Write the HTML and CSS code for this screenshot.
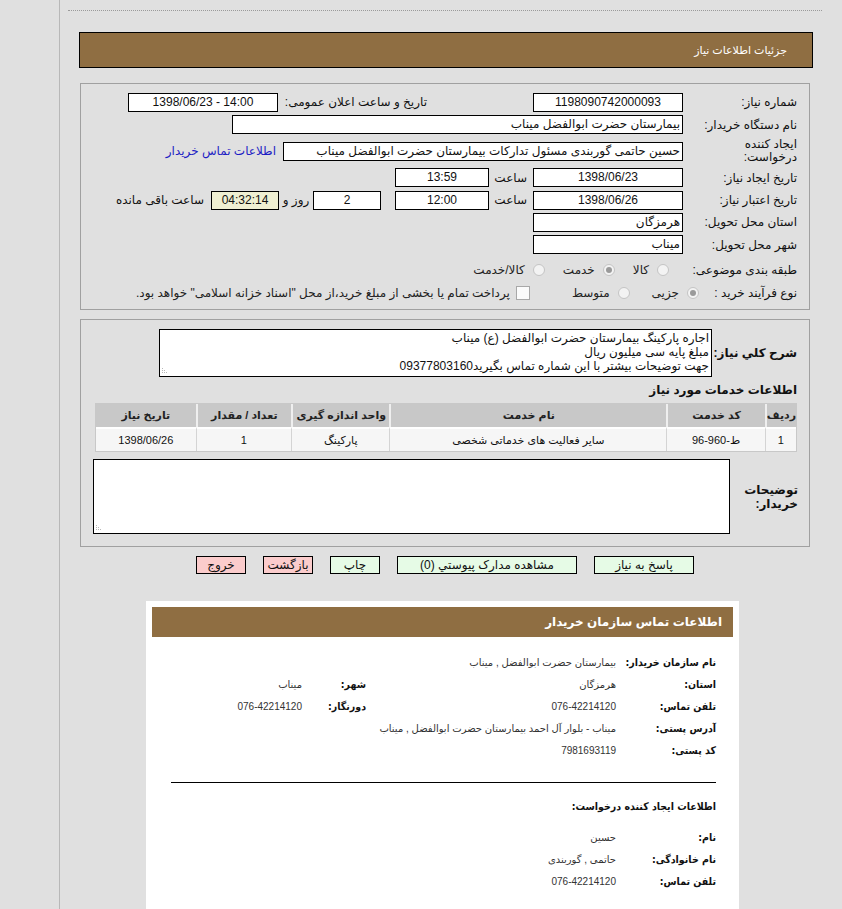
FILE: index.html
```html
<!DOCTYPE html>
<html lang="fa">
<head>
<meta charset="utf-8">
<title>جزئیات اطلاعات نیاز</title>
<link rel="stylesheet" href="styles.css">
</head>
<body>
<div class="side"></div>
<div class="main" dir="rtl">
  <div class="dots"></div>
  <div class="title">جزئیات اطلاعات نیاز</div>

  <div class="panel p1">
    <div class="row h22">
      <div class="lbl">شماره نیاز:</div>
      <div class="box w150 c">1198090742000093</div>
      <div class="lbl2">تاریخ و ساعت اعلان عمومی:</div>
      <div class="box w150 c ltr">1398/06/23 - 14:00</div>
    </div>
    <div class="row h23">
      <div class="lbl">نام دستگاه خریدار:</div>
      <div class="box w451 r fa">بیمارستان حضرت ابوالفضل میناب</div>
    </div>
    <div class="row h30">
      <div class="lbl two">ایجاد کننده<br>درخواست:</div>
      <div class="box w400 r fa">حسین حاتمی گوربندی مسئول تدارکات بیمارستان حضرت ابوالفضل میناب</div>
      <a class="link" href="#">اطلاعات تماس خریدار</a>
    </div>
    <div class="row h23">
      <div class="lbl">تاریخ ایجاد نیاز:</div>
      <div class="box w150 c">1398/06/23</div>
      <div class="sa">ساعت</div>
      <div class="box w95 c">13:59</div>
    </div>
    <div class="row h22">
      <div class="lbl">تاریخ اعتبار نیاز:</div>
      <div class="box w150 c">1398/06/26</div>
      <div class="sa">ساعت</div>
      <div class="box w95 c">12:00</div>
      <div class="box w68 c gap14">2</div>
      <div class="rz">روز و</div>
      <div class="box w68 c yel">04:32:14</div>
      <div class="rem">ساعت باقی مانده</div>
    </div>
    <div class="row h22">
      <div class="lbl">استان محل تحویل:</div>
      <div class="box w150 r fa">هرمزگان</div>
    </div>
    <div class="row h23">
      <div class="lbl">شهر محل تحویل:</div>
      <div class="box w150 r fa">میناب</div>
    </div>
    <div class="row h27">
      <div class="lbl">طبقه بندی موضوعی:</div>
      <div class="opts o1">
        <span class="opt"><span class="radio"></span>کالا</span>
        <span class="opt"><span class="radio on"></span>خدمت</span>
        <span class="opt"><span class="radio"></span>کالا/خدمت</span>
      </div>
    </div>
    <div class="row h20">
      <div class="lbl narrow">نوع فرآیند خرید :</div>
      <div class="opts o2">
        <span class="opt"><span class="radio on"></span>جزیی</span>
        <span class="opt"><span class="radio"></span>متوسط</span>
        <span class="opt wide"><span class="check"></span>پرداخت تمام یا بخشی از مبلغ خرید،از محل "اسناد خزانه اسلامی" خواهد بود.</span>
      </div>
    </div>
  </div>

  <div class="panel p2">
    <div class="row">
      <div class="blbl">شرح کلي نياز:</div>
      <div class="area a1">
        <div>اجاره پارکینگ بیمارستان حضرت ابوالفضل (ع) میناب</div>
        <div>مبلغ پایه سی میلیون ریال</div>
        <div>جهت توضیحات بیشتر با این شماره تماس بگیرید09377803160</div>
        <svg class="grip" width="8" height="8" viewBox="0 0 8 8"><g fill="#b8b8b8"><rect x="1" y="1" width="1" height="1"/><rect x="1" y="3" width="1" height="1"/><rect x="3" y="3" width="1" height="1"/><rect x="1" y="5" width="1" height="1"/><rect x="3" y="5" width="1" height="1"/><rect x="5" y="5" width="1" height="1"/></g></svg>
      </div>
    </div>
    <div class="sub">اطلاعات خدمات مورد نیاز</div>
    <table class="grid">
      <thead>
        <tr>
          <th class="c1">ردیف</th>
          <th class="c2">کد خدمت</th>
          <th class="c3">نام خدمت</th>
          <th class="c4">واحد اندازه گیری</th>
          <th class="c5">تعداد / مقدار</th>
          <th class="c6">تاریخ نیاز</th>
        </tr>
      </thead>
      <tbody>
        <tr>
          <td>1</td>
          <td>ط-960-96</td>
          <td>سایر فعالیت های خدماتی شخصی</td>
          <td>پارکینگ</td>
          <td>1</td>
          <td>1398/06/26</td>
        </tr>
      </tbody>
    </table>
    <div class="row notes">
      <div class="blbl nl">توضیحات<br>خریدار:</div>
      <div class="area a2">
        <svg class="grip" width="8" height="8" viewBox="0 0 8 8"><g fill="#b8b8b8"><rect x="1" y="1" width="1" height="1"/><rect x="1" y="3" width="1" height="1"/><rect x="3" y="3" width="1" height="1"/><rect x="1" y="5" width="1" height="1"/><rect x="3" y="5" width="1" height="1"/><rect x="5" y="5" width="1" height="1"/></g></svg>
      </div>
    </div>
  </div>

  <div class="buttons">
    <button class="btn g w100">پاسخ به نیاز</button>
    <button class="btn g w180">مشاهده مدارک پیوستي (0)</button>
    <button class="btn g w50">چاپ</button>
    <button class="btn p w50">بازگشت</button>
    <button class="btn p w50">خروج</button>
  </div>

  <div class="card">
    <div class="chead">اطلاعات تماس سازمان خریدار</div>
    <div class="cgrid">
      <div class="cl">نام سازمان خریدار:</div>
      <div class="cv span3">بیمارستان حضرت ابوالفضل , میناب</div>

      <div class="cl">استان:</div>
      <div class="cv">هرمزگان</div>
      <div class="cl">شهر:</div>
      <div class="cv">میناب</div>

      <div class="cl">تلفن تماس:</div>
      <div class="cv">076-42214120</div>
      <div class="cl">دورنگار:</div>
      <div class="cv">076-42214120</div>

      <div class="cl">آدرس پستی:</div>
      <div class="cv span3">میناب - بلوار آل احمد بیمارستان حضرت ابوالفضل , میناب</div>

      <div class="cl">کد پستی:</div>
      <div class="cv span3">7981693119</div>
    </div>
    <hr class="sep">
    <div class="ctitle">اطلاعات ایجاد کننده درخواست:</div>
    <div class="cgrid second">
      <div class="cl">نام:</div>
      <div class="cv span3">حسین</div>
      <div class="cl">نام خانوادگی:</div>
      <div class="cv span3">حاتمی , گوربندی</div>
      <div class="cl">تلفن تماس:</div>
      <div class="cv span3">076-42214120</div>
    </div>
  </div>
</div>
</body>
</html>
```

FILE: styles.css
```css
html, body {
  margin: 0;
  padding: 0;
}

body {
  background: #e0e0e0;
  display: flex;
  min-height: 909px;
  font-family: "Liberation Sans", "DejaVu Sans", sans-serif;
  font-size: 12px;
  color: #111;
  overflow: hidden;
}

.side {
  flex: none;
  width: 59px;
  border-right: 1px solid #b8b8b8;
}

.main {
  flex: 1;
  min-width: 0;
}

.dots {
  margin: 10px 20px 0 8px;
  border-top: 1px dotted #9a9a9a;
}

.title {
  margin: 21px 29px 0 19px;
  height: 34px;
  border: 1px solid #000;
  background: #8f6e42;
  color: #fff;
  padding-right: 25px;
  display: flex;
  align-items: center;
  font-size: 11px;
}

.panel {
  margin: 15px 32px 0 20px;
  border: 1px solid #a0a0a0;
}

.p1 {
  padding: 7px 0 6px;
}

.p2 {
  margin-top: 9px;
  padding: 9px 0 12px;
}

.row {
  display: flex;
  align-items: center;
}

.h20 { height: 20px; }
.h22 { height: 22px; }
.h23 { height: 23px; }
.h27 { height: 27px; }
.h30 { height: 30px; }

.lbl {
  flex: none;
  width: 126px;
  box-sizing: border-box;
  padding-right: 12px;
  white-space: nowrap;
}

.lbl.two {
  line-height: 13px;
}

.lbl.narrow {
  width: 110px;
}

.lbl2 {
  flex: none;
  width: 255px;
  box-sizing: border-box;
  padding-right: 106px;
  white-space: nowrap;
}

.box {
  flex: none;
  box-sizing: border-box;
  height: 19px;
  line-height: 17px;
  border: 1px solid #000;
  background: #fff;
  font-size: 12px;
  white-space: nowrap;
  overflow: hidden;
  color: #111;
}

.box.c { text-align: center; }
.box.r { text-align: right; padding-right: 2px; }
.box.ltr { direction: ltr; }
.box.yel { background: #efefd2; }

.w150 { width: 150px; }
.w451 { width: 451px; }
.w400 { width: 400px; }
.w95 { width: 94px; }
.w68 { width: 68px; }
.gap14 { margin-right: 14px; }

.link {
  margin-right: 7px;
  color: #1d1dc4;
  text-decoration: none;
  white-space: nowrap;
}

.sa {
  flex: none;
  width: 44px;
  box-sizing: border-box;
  padding-right: 6px;
}

.rz {
  flex: none;
  width: 34px;
  text-align: center;
}

.rem {
  margin-right: 7px;
  white-space: nowrap;
}

.opts {
  display: flex;
  align-items: center;
  white-space: nowrap;
}

.o1 { margin-right: 14px; gap: 18px; }
.o2 { gap: 22px; }

.opt {
  display: flex;
  align-items: center;
  gap: 8px;
  color: #222;
}

.opt.wide {
  margin-right: 20px;
  gap: 6px;
}

.radio {
  flex: none;
  width: 12px;
  height: 12px;
  box-sizing: border-box;
  border-radius: 50%;
  border: 1px solid #c4c4c4;
  background: #f3f3f3;
  position: relative;
}

.radio.on::after {
  content: "";
  position: absolute;
  left: 2px;
  top: 2px;
  width: 6px;
  height: 6px;
  border-radius: 50%;
  background: #9a9a9a;
}

.check {
  flex: none;
  width: 14px;
  height: 14px;
  box-sizing: border-box;
  border: 1px solid #a8a8a8;
  background: #fbfbfb;
}

.blbl {
  flex: none;
  width: 97px;
  box-sizing: border-box;
  padding-right: 12px;
  font-weight: bold;
  font-size: 12px;
  white-space: nowrap;
}

.blbl.nl {
  width: 79px;
  padding-right: 11px;
  line-height: 14px;
}

.area {
  flex: none;
  box-sizing: border-box;
  border: 1px solid #000;
  background: #fff;
  position: relative;
  font-size: 12px;
  line-height: 14px;
  padding: 1px 2px 0 0;
  color: #111;
}

.a1 {
  width: 553px;
  height: 48px;
}

.a2 {
  width: 637px;
  height: 75px;
}

.grip {
  position: absolute;
  left: 1px;
  bottom: 1px;
}

.sub {
  margin: 5px 12px 0 0;
  font-weight: bold;
  font-size: 12px;
  line-height: 16px;
}

.grid {
  margin: 5px 12px 0 0;
  width: 702px;
  border: 1px solid #c8c8c8;
  border-collapse: separate;
  border-spacing: 0;
  background: #fff;
  font-size: 11px;
}

.grid th {
  height: 23px;
  background: #c8c8c8;
  font-weight: bold;
  color: #222;
  border-left: 2px solid #efefef;
  padding: 0;
}

.grid td {
  height: 22px;
  background: #f6f6f6;
  text-align: center;
  border-left: 1px solid #d4d4d4;
  border-top: 2px solid #fff;
  padding: 0;
  color: #111;
}

.grid th:last-child,
.grid td:last-child {
  border-left: none;
}

.grid .c1 { width: 28px; }
.grid .c2 { width: 97px; }
.grid .c3 { width: 277px; }
.grid .c4 { width: 97px; }
.grid .c5 { width: 94px; }
.grid .c6 { width: 100px; }

.notes {
  margin-top: 7px;
}

.buttons {
  margin: 9px 32px 0 20px;
  display: flex;
  justify-content: center;
  gap: 17px;
}

.btn {
  height: 18px;
  box-sizing: border-box;
  border: 1px solid #000;
  font-family: "Liberation Sans", "DejaVu Sans", sans-serif;
  font-size: 12px;
  line-height: 16px;
  padding: 0;
  color: #111;
}

.btn.g { background: #e6fbe6; }
.btn.p { background: #fbcccc; }
.w100 { width: 100px; }
.w180 { width: 180px; }
.w50 { width: 50px; }

.card {
  width: 593px;
  margin: 27px 103px 0 0;
  box-sizing: border-box;
  background: #fff;
  padding: 6px 6px 30px;
}

.chead {
  height: 30px;
  background: #8f6e42;
  color: #fff;
  font-weight: bold;
  font-size: 12px;
  display: flex;
  align-items: center;
  padding-right: 11px;
}

.cgrid {
  display: grid;
  grid-template-columns: 100px 250px 64px 1fr;
  grid-auto-rows: 22px;
  align-items: center;
  margin: 14px 17px 0 0;
}

.cgrid.second {
  margin-top: 9px;
}

.cl {
  font-family: "DejaVu Sans Condensed", "DejaVu Sans", sans-serif;
  font-weight: bold;
  font-size: 10.5px;
  color: #111;
  white-space: nowrap;
}

.cv {
  font-size: 10px;
  color: #333;
  white-space: nowrap;
}

.span3 {
  grid-column: span 3;
}

.sep {
  margin: 21px 17px 0 19px;
  border: 0;
  border-top: 1px solid #000;
  height: 0;
}

.ctitle {
  margin: 12px 17px 0 0;
  height: 22px;
  line-height: 22px;
  font-family: "DejaVu Sans Condensed", "DejaVu Sans", sans-serif;
  font-weight: bold;
  font-size: 10.5px;
}
```
